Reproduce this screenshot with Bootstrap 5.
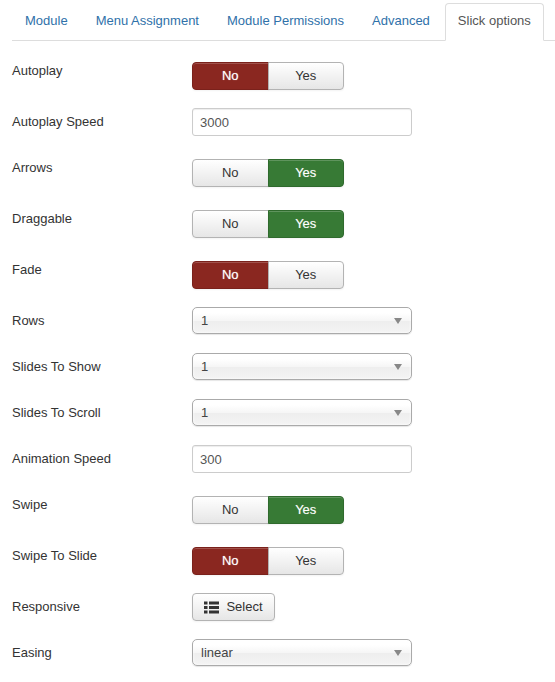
<!DOCTYPE html>
<html lang="en">
<head>
  <meta charset="UTF-8">
  <meta name="viewport" content="width=device-width, initial-scale=1.0">
  <title>Slick options</title>
  <link href="https://cdn.jsdelivr.net/npm/bootstrap@5.3.0/dist/css/bootstrap.min.css" rel="stylesheet">
  <style>
    body { font-family: "Liberation Sans", Arial, sans-serif; font-size: 13px; line-height: 18px; color: #333; background: #fff; overflow: hidden; }
    .tab-bar { margin: 0 0 16px 12px; padding: 3px 0 0 0; height: 41px; border-bottom: 1px solid #ddd; gap: 2px; flex-wrap: nowrap; }
    .tab-bar .nav-link { padding: 6px 12px 8px; height: 38px; line-height: 22px; font-size: 13px; color: #3071a9; border: 1px solid transparent; border-radius: 4px 4px 0 0; white-space: nowrap; }
    .tab-bar .nav-link.active { color: #555; background: #fff; border-color: #ddd #ddd #fff; }
    .form-line { margin-bottom: 18px; padding-left: 12px; }
    .form-line.with-toggle { padding-top: 5px; }
    .form-line.with-toggle .field-label { padding-top: 0; }
    .field-label { width: 180px; flex: none; padding-top: 5px; color: #333; }
    .toggle-pair { width: 152px; height: 28px; }
    .toggle-pair .btn { flex: 1 1 50%; font-size: 13px; line-height: 18px; padding: 4px 0; border-radius: 4px; color: #333; background: linear-gradient(#fff, #e6e6e6); border: 1px solid #b3b3b3; box-shadow: inset 0 1px 0 rgba(255,255,255,.2), 0 1px 2px rgba(0,0,0,.05); }
    .toggle-pair .btn.is-no { background: #8a2720; border-color: #7a211b; color: #fff; text-shadow: 0 0 1px rgba(255,255,255,.6); }
    .toggle-pair .btn.is-yes { background: #377a35; border-color: #2f6a2d; color: #fff; text-shadow: 0 0 1px rgba(255,255,255,.4); }
    .text-field.form-control { width: 220px; height: 28px; padding: 4px 7px; font-size: 13px; line-height: 18px; color: #555; border: 1px solid #ccc; border-radius: 3px; box-shadow: inset 0 1px 1px rgba(0,0,0,.075); }
    .drop-field { width: 220px; height: 27px; margin-bottom: 1px; padding: 3px 8px; color: #444; line-height: 19px; border: 1px solid #aaa; border-radius: 5px; background: linear-gradient(#fff 20%, #f6f6f6 50%, #eee 52%, #f4f4f4); box-shadow: 0 0 3px #fff inset, 0 1px 1px rgba(0,0,0,.1); }
    .drop-arrow { width: 0; height: 0; margin-right: 1px; border-left: 4px solid transparent; border-right: 4px solid transparent; border-top: 6px solid #888; }
    .select-btn.btn { width: 83px; height: 28px; padding: 4px 0; font-size: 13px; line-height: 18px; color: #333; background: linear-gradient(#fff, #e6e6e6); border: 1px solid #b3b3b3; border-radius: 4px; box-shadow: 0 1px 2px rgba(0,0,0,.05); }
    .select-btn.btn { gap: 7px; }
  </style>
</head>
<body>
  <ul class="nav nav-tabs tab-bar">
    <li class="nav-item"><a class="nav-link" href="#">Module</a></li>
    <li class="nav-item"><a class="nav-link" href="#">Menu Assignment</a></li>
    <li class="nav-item"><a class="nav-link" href="#">Module Permissions</a></li>
    <li class="nav-item"><a class="nav-link" href="#">Advanced</a></li>
    <li class="nav-item"><a class="nav-link active" href="#">Slick options</a></li>
  </ul>

  <form id="formSlick">
    <div class="form-line with-toggle d-flex">
      <div class="field-label">Autoplay</div>
      <div class="btn-group toggle-pair"><button type="button" class="btn is-no">No</button><button type="button" class="btn">Yes</button></div>
    </div>
    <div class="form-line d-flex">
      <div class="field-label">Autoplay Speed</div>
      <input type="text" class="form-control text-field" value="3000">
    </div>
    <div class="form-line with-toggle d-flex">
      <div class="field-label">Arrows</div>
      <div class="btn-group toggle-pair"><button type="button" class="btn">No</button><button type="button" class="btn is-yes">Yes</button></div>
    </div>
    <div class="form-line with-toggle d-flex">
      <div class="field-label">Draggable</div>
      <div class="btn-group toggle-pair"><button type="button" class="btn">No</button><button type="button" class="btn is-yes">Yes</button></div>
    </div>
    <div class="form-line with-toggle d-flex">
      <div class="field-label">Fade</div>
      <div class="btn-group toggle-pair"><button type="button" class="btn is-no">No</button><button type="button" class="btn">Yes</button></div>
    </div>
    <div class="form-line d-flex">
      <div class="field-label">Rows</div>
      <div class="drop-field d-flex align-items-center justify-content-between"><span>1</span><span class="drop-arrow"></span></div>
    </div>
    <div class="form-line d-flex">
      <div class="field-label">Slides To Show</div>
      <div class="drop-field d-flex align-items-center justify-content-between"><span>1</span><span class="drop-arrow"></span></div>
    </div>
    <div class="form-line d-flex">
      <div class="field-label">Slides To Scroll</div>
      <div class="drop-field d-flex align-items-center justify-content-between"><span>1</span><span class="drop-arrow"></span></div>
    </div>
    <div class="form-line d-flex">
      <div class="field-label">Animation Speed</div>
      <input type="text" class="form-control text-field" value="300">
    </div>
    <div class="form-line with-toggle d-flex">
      <div class="field-label">Swipe</div>
      <div class="btn-group toggle-pair"><button type="button" class="btn">No</button><button type="button" class="btn is-yes">Yes</button></div>
    </div>
    <div class="form-line with-toggle d-flex">
      <div class="field-label">Swipe To Slide</div>
      <div class="btn-group toggle-pair"><button type="button" class="btn is-no">No</button><button type="button" class="btn">Yes</button></div>
    </div>
    <div class="form-line d-flex">
      <div class="field-label">Responsive</div>
      <button type="button" class="btn select-btn d-flex align-items-center justify-content-center">
        <svg width="15" height="13" viewBox="0 0 15 13" fill="#333"><rect x="0" y="0.5" width="3.5" height="3"/><rect x="5" y="0.5" width="10" height="3"/><rect x="0" y="5" width="3.5" height="3"/><rect x="5" y="5" width="10" height="3"/><rect x="0" y="9.5" width="3.5" height="3"/><rect x="5" y="9.5" width="10" height="3"/></svg>
        <span>Select</span>
      </button>
    </div>
    <div class="form-line d-flex">
      <div class="field-label">Easing</div>
      <div class="drop-field d-flex align-items-center justify-content-between"><span>linear</span><span class="drop-arrow"></span></div>
    </div>
  </form>
  <script src="https://cdn.jsdelivr.net/npm/bootstrap@5.3.0/dist/js/bootstrap.bundle.min.js"></script>
</body>
</html>
